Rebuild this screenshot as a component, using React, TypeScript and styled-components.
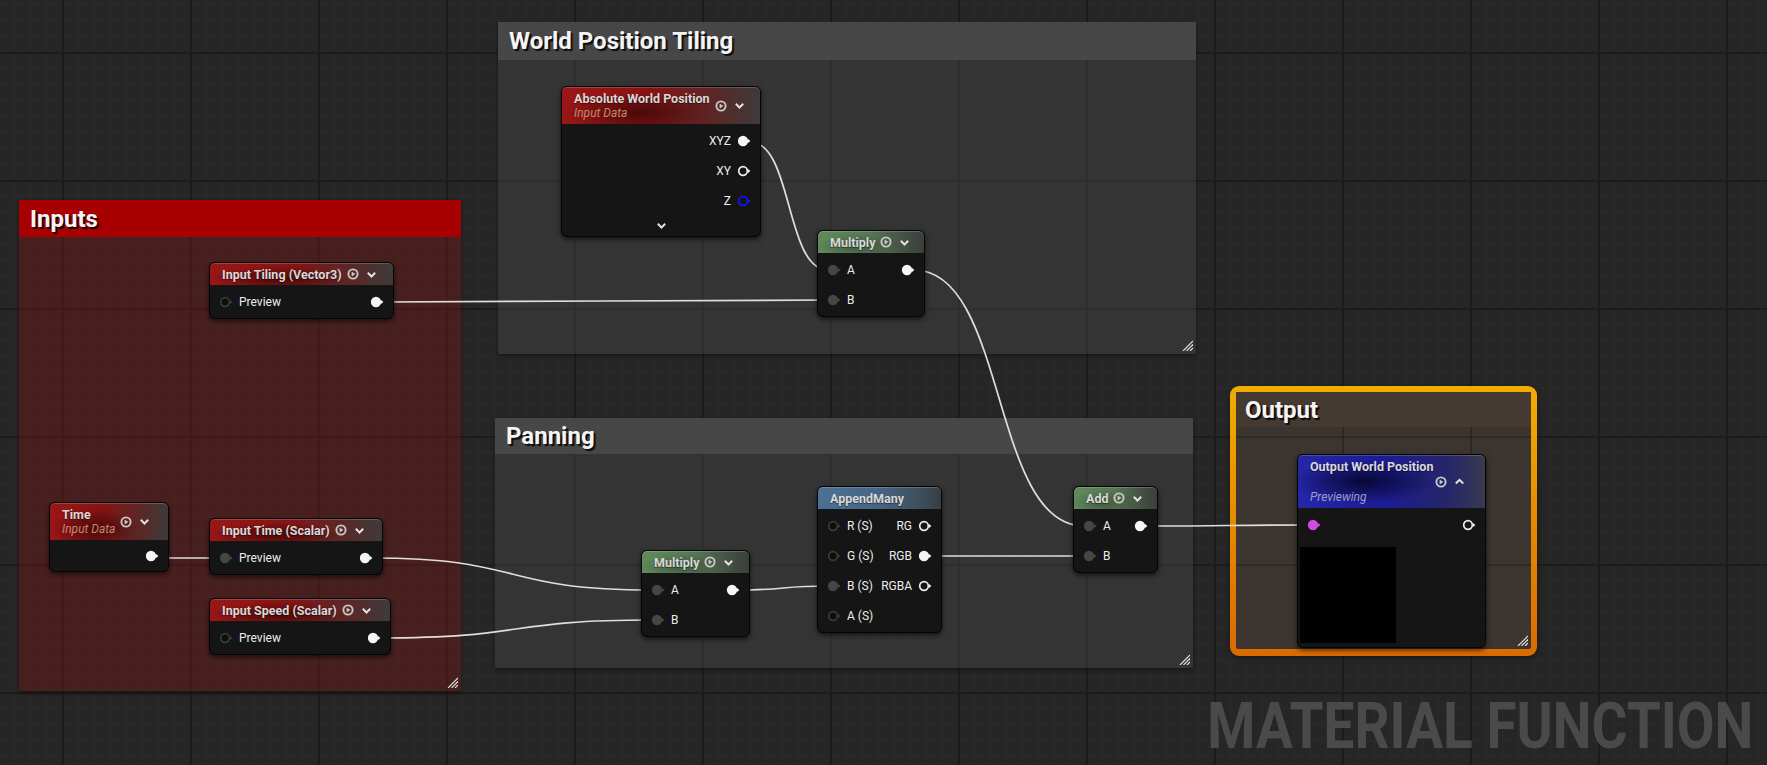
import React from 'react'
import styled, { createGlobalStyle } from 'styled-components'

const GlobalStyle = createGlobalStyle`
	html, body {
		margin: 0;
		padding: 0;
		background: #262626;
		overflow: hidden;
	}
	body {
		font-family: Roboto, "Liberation Sans", sans-serif;
	}
`

type Tint = 'red' | 'green' | 'steel' | 'blue'
type PinKind = 'inLinked' | 'inOpen' | 'outLinked' | 'outOpen' | 'blue' | 'magenta'

const headerBg: Record<Tint, string> = {
	red: `radial-gradient(ellipse 55% 80% at 38% 70%, rgba(20,0,0,0.55), transparent 70%),
		linear-gradient(to right, #9c1616 0%, #861414 45%, #5a2828 78%, #3f3a3a 100%)`,
	green: `radial-gradient(ellipse 55% 80% at 35% 70%, rgba(0,0,0,0.25), transparent 70%),
		linear-gradient(to right, #628a5c 0%, #557553 50%, #445244 80%, #3b3f3b 100%)`,
	steel: `linear-gradient(to right, #4d7193 0%, #476583 50%, #3d4c5a 85%, #383e44 100%)`,
	blue: `radial-gradient(ellipse 55% 60% at 35% 50%, rgba(0,0,20,0.75), transparent 70%),
		linear-gradient(to right, #2626a8 0%, #1c1c96 45%, #25256a 80%, #3a3a50 100%)`,
}

const pinColors: Record<PinKind, { fill: string; stroke: string }> = {
	inLinked: { fill: '#464646', stroke: '#464646' },
	inOpen: { fill: '#0e0e0e', stroke: '#3a3a3a' },
	outLinked: { fill: '#f6f6f6', stroke: '#f6f6f6' },
	outOpen: { fill: 'none', stroke: '#ececec' },
	blue: { fill: 'none', stroke: '#1414ff' },
	magenta: { fill: '#d24ae6', stroke: '#d24ae6' },
}

const gridImage = (major: string, minor: string) => `
	linear-gradient(to right, ${major} 2px, transparent 2px),
	linear-gradient(to bottom, ${major} 2px, transparent 2px),
	linear-gradient(to right, ${minor} 1px, transparent 1px),
	linear-gradient(to bottom, ${minor} 1px, transparent 1px)
`

const Canvas = styled.div`
	position: relative;
	width: 1767px;
	height: 765px;
	overflow: hidden;
	background-color: #262626;
	background-image: ${gridImage('#1c1c1c', '#2b2b2b')};
	background-size: 128px 128px, 128px 128px, 16px 16px, 16px 16px;
	background-position: 62px 0, 0 52px, 14px 0, 0 4px;
`

/* ---------- comment boxes ---------- */

const CommentBox = styled.div<{ $x: number; $y: number; $w: number; $h: number; $body: string }>`
	position: absolute;
	left: ${(p) => p.$x}px;
	top: ${(p) => p.$y}px;
	width: ${(p) => p.$w}px;
	height: ${(p) => p.$h}px;
	display: flex;
	flex-direction: column;
	background: ${(p) => p.$body};
	box-shadow: 0 2px 5px rgba(0, 0, 0, 0.4);
	border-radius: 2px;
`

const HighlightFrame = styled.div<{ $x: number; $y: number; $w: number; $h: number }>`
	position: absolute;
	left: ${(p) => p.$x}px;
	top: ${(p) => p.$y}px;
	width: ${(p) => p.$w}px;
	height: ${(p) => p.$h}px;
	box-sizing: border-box;
	border-style: solid;
	border-color: transparent;
	border-width: 6px 6px 7px 6px;
	border-radius: 9px;
	background:
		linear-gradient(#3c342e, #3c342e) padding-box,
		linear-gradient(to bottom, #f2ac00, #d96a00) border-box;
	display: flex;
	box-shadow: 0 2px 6px rgba(0, 0, 0, 0.4);
`

/* grid continues under the highlighted comment, offset to its inner origin (1236, 392) */
const HighlightInner = styled.div`
	flex: 1;
	display: flex;
	flex-direction: column;
	border-radius: 3px;
	background-image: ${gridImage('rgba(0,0,0,0.22)', 'rgba(255,255,255,0.025)')};
	background-size: 128px 128px, 128px 128px, 16px 16px, 16px 16px;
	background-position: 106px 0, 0 44px, 2px 0, 0 12px;
`

const CommentHeader = styled.div<{ $bg: string; $h: number; $pad?: number }>`
	height: ${(p) => p.$h}px;
	flex: none;
	display: flex;
	align-items: center;
	padding-left: ${(p) => p.$pad ?? 11}px;
	background: ${(p) => p.$bg};
	color: #f4f4f4;
	font-family: Roboto, "Liberation Sans", sans-serif;
	font-weight: 700;
	font-size: 24px;
	text-shadow: 2px 2px 1px rgba(0, 0, 0, 0.85);
	white-space: nowrap;
`

const CommentBody = styled.div`
	flex: 1;
	display: flex;
	align-items: flex-end;
	justify-content: flex-end;
	padding: 0 3px 3px 0;
`

const ResizeGrip = () => (
	<svg width="11" height="11" viewBox="0 0 11 11">
		<g stroke="#e6e6e6" strokeWidth="1.1">
			<line x1="1" y1="11" x2="11" y2="1" />
			<line x1="4.5" y1="11" x2="11" y2="4.5" />
			<line x1="8" y1="11" x2="11" y2="8" />
		</g>
	</svg>
)

const Comment = ({
	x, y, w, h, title, header, body, headerH,
}: {
	x: number; y: number; w: number; h: number; title: string; header: string; body: string; headerH: number
}) => (
	<CommentBox $x={x} $y={y} $w={w} $h={h} $body={body}>
		<CommentHeader $bg={header} $h={headerH}>{title}</CommentHeader>
		<CommentBody><ResizeGrip /></CommentBody>
	</CommentBox>
)

/* ---------- nodes ---------- */

const NodeBox = styled.div<{ $x: number; $y: number; $w: number }>`
	position: absolute;
	left: ${(p) => p.$x}px;
	top: ${(p) => p.$y}px;
	width: ${(p) => p.$w}px;
	box-sizing: border-box;
	display: flex;
	flex-direction: column;
	background: #141514;
	border: 1px solid #050505;
	border-radius: 6px;
	box-shadow: 0 2px 5px rgba(0, 0, 0, 0.65);
	z-index: 2;
	font-family: Roboto, "Liberation Sans", sans-serif;
`

const NodeHeader = styled.div<{ $tint: Tint; $h: number; $stack?: boolean }>`
	height: ${(p) => p.$h}px;
	flex: none;
	box-sizing: border-box;
	display: flex;
	flex-direction: ${(p) => (p.$stack ? 'column' : 'row')};
	align-items: ${(p) => (p.$stack ? 'stretch' : 'center')};
	justify-content: ${(p) => (p.$stack ? 'center' : 'flex-start')};
	gap: ${(p) => (p.$stack ? 0 : 5)}px;
	padding: 0 14px 0 12px;
	background: ${(p) => headerBg[p.$tint]};
	border-radius: 5px 5px 0 0;
	box-shadow: inset 0 1px 0 rgba(255, 255, 255, 0.18);
`

const TitleBlock = styled.div`
	display: flex;
	flex-direction: column;
	line-height: 15px;
`

const Title = styled.span`
	font-weight: 700;
	font-size: 12.5px;
	line-height: 15px;
	color: #d8d8d8;
	white-space: nowrap;
	text-shadow: 0 1px 1px rgba(0, 0, 0, 0.5);
`

const Subtitle = styled.span<{ $color?: string }>`
	font-style: italic;
	font-size: 12px;
	line-height: 15px;
	color: ${(p) => p.$color ?? '#c9876f'};
	white-space: nowrap;
`

const IconGroup = styled.div<{ $end?: boolean }>`
	display: flex;
	align-items: center;
	gap: 7px;
	height: ${(p) => (p.$end ? 16 : 12)}px;
	justify-content: ${(p) => (p.$end ? 'flex-end' : 'flex-start')};
	padding-right: ${(p) => (p.$end ? 6 : 0)}px;
`

const NodeBody = styled.div`
	display: flex;
	flex-direction: column;
	padding: 2px 0 1px 0;
`

const Row = styled.div<{ $justify?: string; $h?: number }>`
	height: ${(p) => p.$h ?? 30}px;
	display: flex;
	align-items: center;
	justify-content: ${(p) => p.$justify ?? 'space-between'};
	padding: 0 9px;
	font-size: 12px;
	color: #ececec;
`

const Side = styled.div`
	display: flex;
	align-items: center;
	gap: 6px;
`

const PreviewSwatch = styled.div`
	width: 96px;
	height: 96px;
	background: #000;
	margin: 7px 0 3px 2px;
`

const PreviewIcon = () => (
	<svg width="12" height="12" viewBox="0 0 12 12">
		<circle cx="6" cy="6" r="4.6" fill="none" stroke="#c8c8c8" strokeWidth="1.9" />
		<polygon points="4.6,3.4 8.4,6 4.6,8.6" fill="#c8c8c8" />
	</svg>
)

const Chevron = ({ up }: { up?: boolean }) => (
	<svg width="11" height="11" viewBox="0 0 11 11">
		<polyline
			points={up ? '1.8,7.5 5.5,3.8 9.2,7.5' : '1.8,3.8 5.5,7.5 9.2,3.8'}
			fill="none"
			stroke="#e2e2e2"
			strokeWidth="2"
		/>
	</svg>
)

const Pin = ({ kind }: { kind: PinKind }) => {
	const c = pinColors[kind]
	return (
		<svg width="14" height="12" viewBox="0 0 14 12">
			<circle cx="6" cy="6" r="4.3" fill={c.fill} stroke={c.stroke} strokeWidth="1.7" />
			<polygon points="10.8,3.8 13.4,6 10.8,8.2" fill={c.stroke} />
		</svg>
	)
}

const Icons = ({ up, end }: { up?: boolean; end?: boolean }) => (
	<IconGroup $end={end}>
		<PreviewIcon />
		<Chevron up={up} />
	</IconGroup>
)

const Node = ({
	x, y, w, tint, headerH = 22, header, children,
}: {
	x: number; y: number; w: number; tint: Tint; headerH?: number; header: React.ReactNode; children: React.ReactNode
}) => (
	<NodeBox $x={x} $y={y} $w={w}>
		<NodeHeader $tint={tint} $h={headerH}>{header}</NodeHeader>
		<NodeBody>{children}</NodeBody>
	</NodeBox>
)

const SimpleHeader = ({ title, icons = true }: { title: string; icons?: boolean }) => (
	<>
		<Title>{title}</Title>
		{icons && <Icons />}
	</>
)

const DataHeader = ({ title }: { title: string }) => (
	<>
		<TitleBlock>
			<Title>{title}</Title>
			<Subtitle>Input Data</Subtitle>
		</TitleBlock>
		<Icons />
	</>
)

/* ---------- wires ---------- */

const WireLayer = styled.svg`
	position: absolute;
	left: 0;
	top: 0;
	z-index: 1;
	pointer-events: none;
`

const wires: [number, number, number, number][] = [
	[383, 302, 828, 300],
	[750, 142, 828, 270],
	[914, 270, 1084, 526],
	[158, 558, 220, 558],
	[372, 558, 652, 590],
	[380, 638, 652, 620],
	[739, 590, 828, 586],
	[931, 556, 1084, 556],
	[1147, 526, 1308, 525],
]

const wirePath = ([x0, y0, x1, y1]: [number, number, number, number]) => {
	const t = Math.max(Math.abs(x1 - x0) * 0.55, 20)
	return `M${x0},${y0} C${x0 + t},${y0} ${x1 - t},${y1} ${x1},${y1}`
}

const Watermark = styled.div`
	position: absolute;
	right: 14px;
	top: 689px;
	font-family: Roboto, "Liberation Sans", sans-serif;
	font-weight: 700;
	font-size: 64px;
	line-height: 75px;
	color: #4a4a4a;
	white-space: nowrap;
	transform: scaleX(0.858);
	transform-origin: right center;
	z-index: 0;
`

export default function App() {
	return (
		<Canvas>
			<GlobalStyle />

			<Comment x={19} y={200} w={442} h={491} headerH={37} title="Inputs" header="#a80000" body="rgba(118, 22, 22, 0.42)" />
			<Comment x={498} y={22} w={698} h={332} headerH={38} title="World Position Tiling" header="#474747" body="rgba(72, 72, 72, 0.42)" />
			<Comment x={495} y={418} w={698} h={250} headerH={36} title="Panning" header="#474747" body="rgba(72, 72, 72, 0.42)" />

			<HighlightFrame $x={1230} $y={386} $w={307} $h={270}>
				<HighlightInner>
					<CommentHeader $bg="#453a31" $h={35} $pad={9}>Output</CommentHeader>
					<CommentBody><ResizeGrip /></CommentBody>
				</HighlightInner>
			</HighlightFrame>

			<Watermark>MATERIAL FUNCTION</Watermark>

			<WireLayer width="1767" height="765">
				{wires.map((w, i) => (
					<path key={i} d={wirePath(w)} fill="none" stroke="#dedede" strokeWidth="1.7" />
				))}
			</WireLayer>

			<Node x={209} y={262} w={185} tint="red" header={<SimpleHeader title="Input Tiling (Vector3)" />}>
				<Row>
					<Side><Pin kind="inOpen" />Preview</Side>
					<Pin kind="outLinked" />
				</Row>
			</Node>

			<Node x={49} y={502} w={120} tint="red" headerH={37} header={<DataHeader title="Time" />}>
				<Row $justify="flex-end" $h={28}>
					<Pin kind="outLinked" />
				</Row>
			</Node>

			<Node x={209} y={518} w={174} tint="red" header={<SimpleHeader title="Input Time (Scalar)" />}>
				<Row>
					<Side><Pin kind="inLinked" />Preview</Side>
					<Pin kind="outLinked" />
				</Row>
			</Node>

			<Node x={209} y={598} w={182} tint="red" header={<SimpleHeader title="Input Speed (Scalar)" />}>
				<Row>
					<Side><Pin kind="inOpen" />Preview</Side>
					<Pin kind="outLinked" />
				</Row>
			</Node>

			<Node x={561} y={86} w={200} tint="red" headerH={37} header={<DataHeader title="Absolute World Position" />}>
				<Row $justify="flex-end"><Side>XYZ<Pin kind="outLinked" /></Side></Row>
				<Row $justify="flex-end"><Side>XY<Pin kind="outOpen" /></Side></Row>
				<Row $justify="flex-end"><Side>Z<Pin kind="blue" /></Side></Row>
				<Row $justify="center" $h={19}><Chevron /></Row>
			</Node>

			<Node x={817} y={230} w={108} tint="green" header={<SimpleHeader title="Multiply" />}>
				<Row>
					<Side><Pin kind="inLinked" />A</Side>
					<Pin kind="outLinked" />
				</Row>
				<Row>
					<Side><Pin kind="inLinked" />B</Side>
				</Row>
			</Node>

			<Node x={641} y={550} w={109} tint="green" header={<SimpleHeader title="Multiply" />}>
				<Row>
					<Side><Pin kind="inLinked" />A</Side>
					<Pin kind="outLinked" />
				</Row>
				<Row>
					<Side><Pin kind="inLinked" />B</Side>
				</Row>
			</Node>

			<Node x={817} y={486} w={125} tint="steel" header={<SimpleHeader title="AppendMany" icons={false} />}>
				<Row>
					<Side><Pin kind="inOpen" />R (S)</Side>
					<Side>RG<Pin kind="outOpen" /></Side>
				</Row>
				<Row>
					<Side><Pin kind="inOpen" />G (S)</Side>
					<Side>RGB<Pin kind="outLinked" /></Side>
				</Row>
				<Row>
					<Side><Pin kind="inLinked" />B (S)</Side>
					<Side>RGBA<Pin kind="outOpen" /></Side>
				</Row>
				<Row>
					<Side><Pin kind="inOpen" />A (S)</Side>
				</Row>
			</Node>

			<Node x={1073} y={486} w={85} tint="green" header={<SimpleHeader title="Add" />}>
				<Row>
					<Side><Pin kind="inLinked" />A</Side>
					<Pin kind="outLinked" />
				</Row>
				<Row>
					<Side><Pin kind="inLinked" />B</Side>
				</Row>
			</Node>

			<NodeBox $x={1297} $y={454} $w={189}>
				<NodeHeader $tint="blue" $h={53} $stack>
					<Title>Output World Position</Title>
					<Icons up end />
					<Subtitle $color="#9c9cc8">Previewing</Subtitle>
				</NodeHeader>
				<NodeBody>
					<Row>
						<Pin kind="magenta" />
						<Pin kind="outOpen" />
					</Row>
					<PreviewSwatch />
				</NodeBody>
			</NodeBox>
		</Canvas>
	)
}
